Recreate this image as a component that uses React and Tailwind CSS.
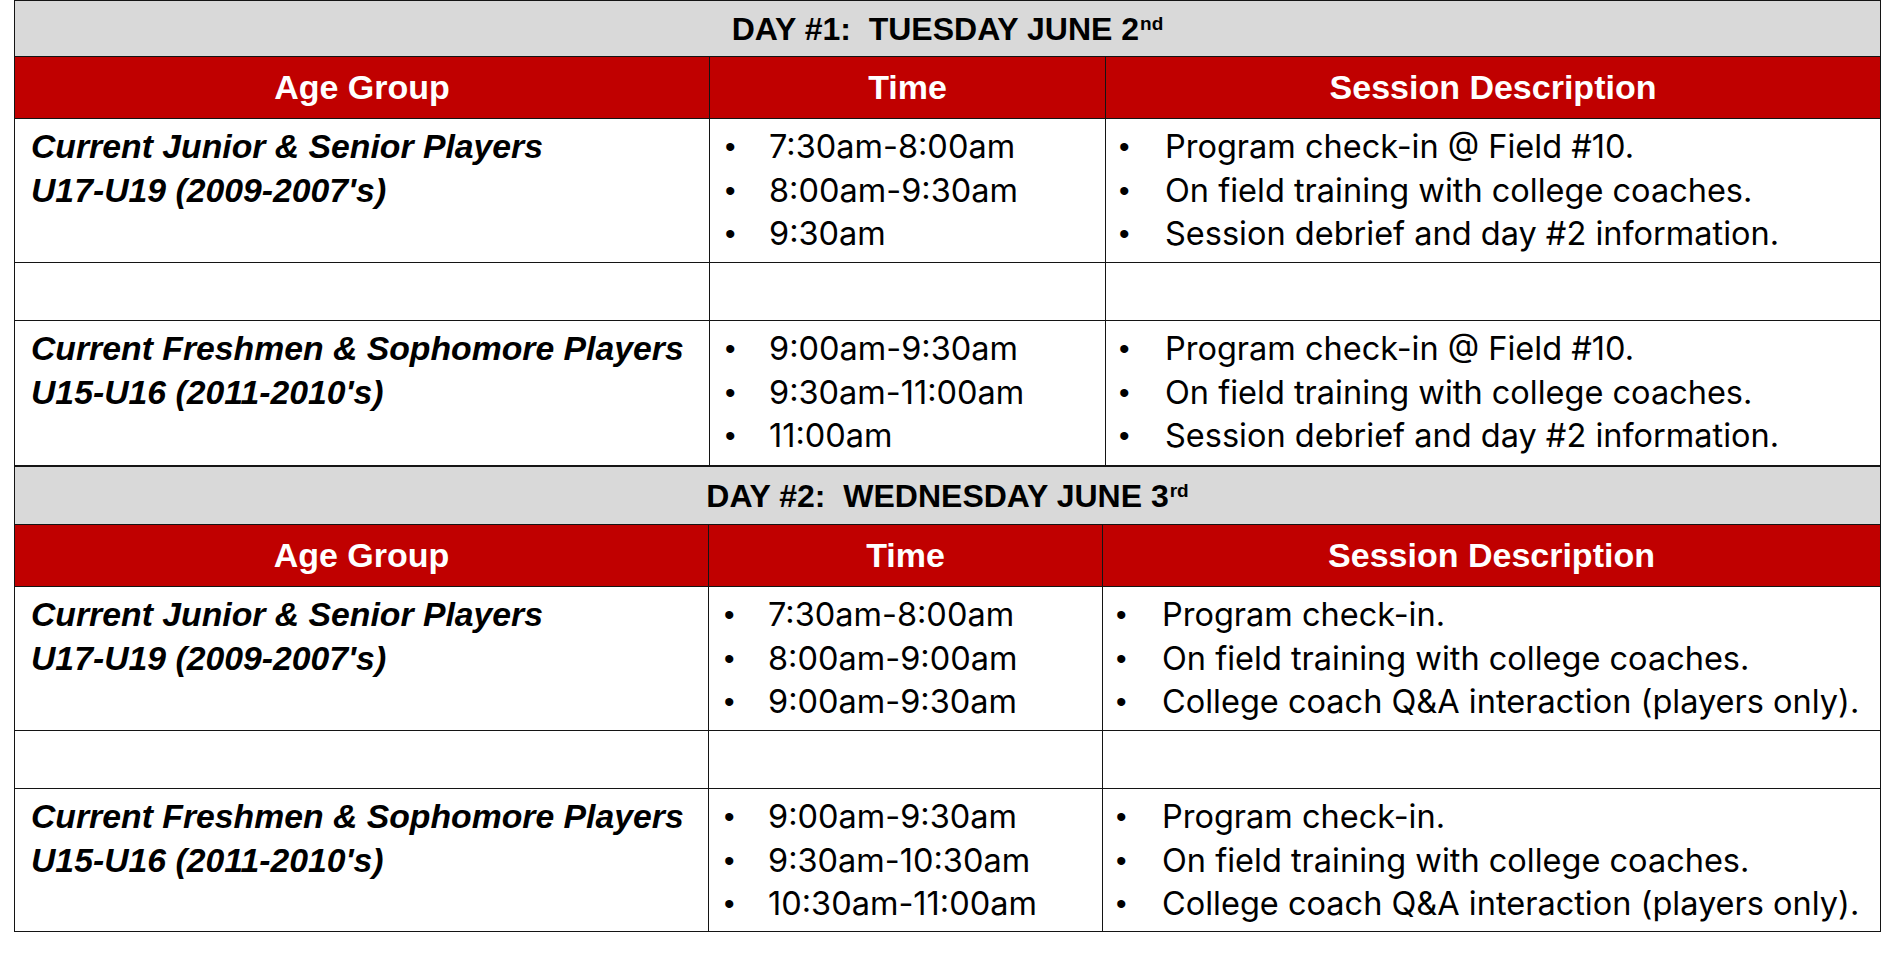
const days = [
  {
    label: 'DAY #1:\u00a0 TUESDAY JUNE 2',
    sup: 'nd',
    cols: ['w-[695px]', 'w-[396px]', 'w-[775px]'],
    heights: ['h-[56px]', 'h-[62px]', 'h-[144px]', 'h-[58px]', 'h-[145px]'],
    groups: [
      {
        name: 'Current Junior & Senior Players',
        ages: "U17-U19 (2009-2007's)",
        times: ['7:30am-8:00am', '8:00am-9:30am', '9:30am'],
        notes: [
          'Program check-in @ Field #10.',
          'On field training with college coaches.',
          'Session debrief and day #2 information.',
        ],
      },
      {
        name: 'Current Freshmen & Sophomore Players',
        ages: "U15-U16 (2011-2010's)",
        times: ['9:00am-9:30am', '9:30am-11:00am', '11:00am'],
        notes: [
          'Program check-in @ Field #10.',
          'On field training with college coaches.',
          'Session debrief and day #2 information.',
        ],
      },
    ],
  },
  {
    label: 'DAY #2:\u00a0 WEDNESDAY JUNE 3',
    sup: 'rd',
    cols: ['w-[694px]', 'w-[394px]', 'w-[778px]'],
    heights: ['h-[58px]', 'h-[62px]', 'h-[144px]', 'h-[58px]', 'h-[143px]'],
    groups: [
      {
        name: 'Current Junior & Senior Players',
        ages: "U17-U19 (2009-2007's)",
        times: ['7:30am-8:00am', '8:00am-9:00am', '9:00am-9:30am'],
        notes: [
          'Program check-in.',
          'On field training with college coaches.',
          'College coach Q&A interaction (players only).',
        ],
      },
      {
        name: 'Current Freshmen & Sophomore Players',
        ages: "U15-U16 (2011-2010's)",
        times: ['9:00am-9:30am', '9:30am-10:30am', '10:30am-11:00am'],
        notes: [
          'Program check-in.',
          'On field training with college coaches.',
          'College coach Q&A interaction (players only).',
        ],
      },
    ],
  },
];

const cell = 'border-[1.5px] border-[#141414] align-top p-0';

function Bullets({ items, indent }) {
  return (
    <ul className="pt-[6px] text-[32.5px] leading-[43.5px] text-black font-normal font-['Inter',sans-serif]">
      {items.map((item) => (
        <li key={item} className="flex whitespace-nowrap">
          <span className={`w-[59px] shrink-0 text-[30px] font-['Liberation_Sans',sans-serif] ${indent}`}>•</span>
          <span>{item}</span>
        </li>
      ))}
    </ul>
  );
}

function GroupRow({ group, height }) {
  return (
    <tr className={height}>
      <td className={cell}>
        <div className="pl-[16px] pt-[6px] text-[33.75px] leading-[43.5px] font-bold italic text-black whitespace-nowrap">
          <div>{group.name}</div>
          <div>{group.ages}</div>
        </div>
      </td>
      <td className={cell}>
        <Bullets items={group.times} indent="pl-[15px]" />
      </td>
      <td className={cell}>
        <Bullets items={group.notes} indent="pl-[13px]" />
      </td>
    </tr>
  );
}

function DayTable({ day }) {
  const [gray, red, first, gap, second] = day.heights;
  return (
    <table className="w-[1866px] table-fixed border-collapse">
      <colgroup>
        {day.cols.map((c) => (
          <col key={c} className={c} />
        ))}
      </colgroup>
      <tbody>
        <tr className={gray}>
          <td colSpan={3} className="border-[1.5px] border-[#141414] bg-[#d9d9d9] text-center align-middle text-[32px] font-bold text-black">
            {day.label}
            <span className="relative -top-[10px] text-[19px] ml-[1px]">{day.sup}</span>
          </td>
        </tr>
        <tr className={red}>
          {['Age Group', 'Time', 'Session Description'].map((h) => (
            <td key={h} className="border-[1.5px] border-[#141414] bg-[#c00000] text-center align-middle text-[34px] font-bold text-white">
              {h}
            </td>
          ))}
        </tr>
        <GroupRow group={day.groups[0]} height={first} />
        <tr className={gap}>
          <td className={cell} />
          <td className={cell} />
          <td className={cell} />
        </tr>
        <GroupRow group={day.groups[1]} height={second} />
      </tbody>
    </table>
  );
}

export default function App() {
  return (
    <div className="min-h-screen w-full bg-white pl-[14px] font-['Liberation_Sans',Arial,sans-serif]">
      {days.map((day) => (
        <DayTable key={day.label} day={day} />
      ))}
    </div>
  );
}
